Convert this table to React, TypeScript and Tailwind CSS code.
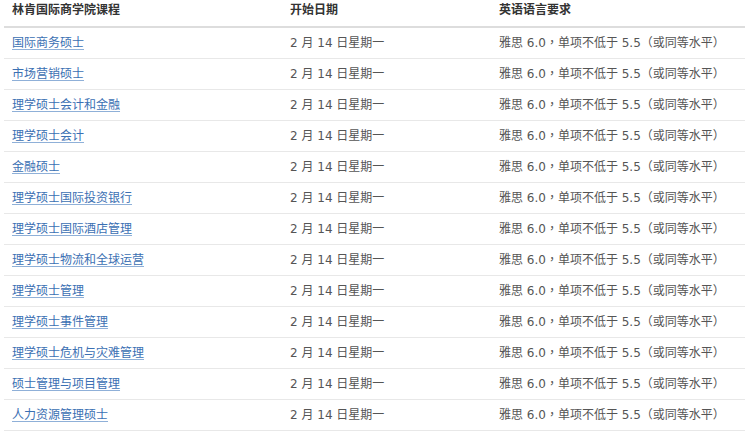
const courses = [
  "国际商务硕士",
  "市场营销硕士",
  "理学硕士会计和金融",
  "理学硕士会计",
  "金融硕士",
  "理学硕士国际投资银行",
  "理学硕士国际酒店管理",
  "理学硕士物流和全球运营",
  "理学硕士管理",
  "理学硕士事件管理",
  "理学硕士危机与灾难管理",
  "硕士管理与项目管理",
  "人力资源管理硕士",
];

// full-width punctuation sits centred in the reference, as the TC cut draws it
const Punct = ({ children }: { children: string }) => (
  <span className="font-['Noto_Sans_CJK_TC',sans-serif]">{children}</span>
);

const App = () => {
  return (
    <div className="bg-white min-h-[436px] pl-1 font-['DejaVu_Sans','Noto_Sans_CJK_SC',sans-serif] text-[12px]">
      <table className="w-[741px] border-collapse table-fixed">
        <colgroup>
          <col className="w-[278px]" />
          <col className="w-[209px]" />
          <col />
        </colgroup>

        <thead>
          <tr className="border-b-2 border-[#dddddd]">
            <th className="text-left font-bold text-[#333333] pl-2 pt-[1px] leading-[18px] h-[27px] align-top">
              林肯国际商学院课程
            </th>
            <th className="text-left font-bold text-[#333333] pl-2 pt-[1px] leading-[18px] h-[27px] align-top">
              开始日期
            </th>
            <th className="text-left font-bold text-[#333333] pl-2 pt-[1px] leading-[18px] h-[27px] align-top">
              英语语言要求
            </th>
          </tr>
        </thead>

        <tbody>
          {courses.map((name) => (
            <tr key={name} className="border-b border-[#e8e8e8]">
              <td className="h-[31px] pl-2 leading-[18px]">
                <a href="#" className="text-[#3b70b3] underline decoration-[#8fb0d8] underline-offset-2">
                  {name}
                </a>
              </td>
              <td className="h-[31px] pl-2 leading-[18px] text-[#555555]">
                2 月 14 日星期一
              </td>
              <td className="h-[31px] pl-2 leading-[18px] text-[#555555]">
                雅思 6.0<Punct>，</Punct>单项不低于 5.5<Punct>（</Punct>或同等水平<Punct>）</Punct>
              </td>
            </tr>
          ))}
        </tbody>
      </table>
    </div>
  );
};

export default App;
